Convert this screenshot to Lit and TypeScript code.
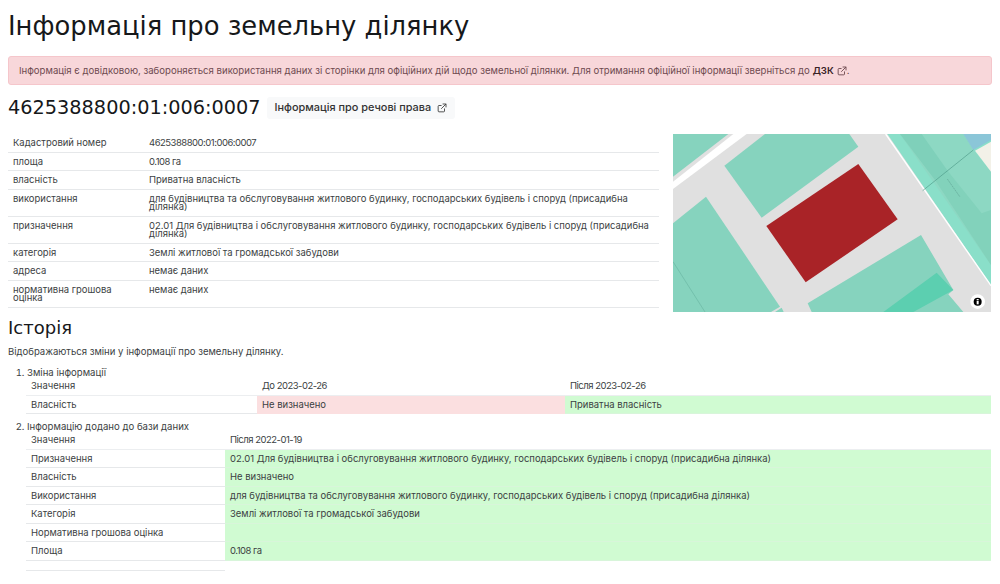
import { LitElement, html, css, svg } from "lit";
import { customElement } from "lit/decorators.js";

const ext = html`<svg class="ext" viewBox="0 0 12 12" fill="none" stroke="currentColor" stroke-width="1.1" stroke-linecap="round" stroke-linejoin="round"><path d="M9 7v2.6a1 1 0 0 1-1 1H2.4a1 1 0 0 1-1-1V4a1 1 0 0 1 1-1H5"/><path d="M7.2 1.2h3.6v3.6M10.6 1.4 5.4 6.6"/></svg>`;

const info: [string, string, boolean?][] = [
  ["Кадастровий номер", "4625388800:01:006:0007", true],
  ["площа", "0.108 га", true],
  ["власність", "Приватна власність"],
  ["використання", "для будівництва та обслуговування житлового будинку, господарських будівель і споруд (присадибна ділянка)"],
  ["призначення", "02.01 Для будівництва і обслуговування житлового будинку, господарських будівель і споруд (присадибна ділянка)"],
  ["категорія", "Землі житлової та громадської забудови"],
  ["адреса", "немає даних"],
  ["нормативна грошова оцінка", "немає даних"],
];

const added: [string, string, boolean?][] = [
  ["Призначення", "02.01 Для будівництва і обслуговування житлового будинку, господарських будівель і споруд (присадибна ділянка)"],
  ["Власність", "Не визначено"],
  ["Використання", "для будівництва та обслуговування житлового будинку, господарських будівель і споруд (присадибна ділянка)"],
  ["Категорія", "Землі житлової та громадської забудови"],
  ["Нормативна грошова оцінка", ""],
  ["Площа", "0.108 га", true],
];

@customElement("app-root")
export class AppRoot extends LitElement {
  static styles = css`
    :host { display: block; padding: 0 8px; height: 584px; box-sizing: border-box; overflow: hidden; background: #fff; color: #3c3f43; font: 9.6px/1.2 Inter, "Noto Sans", sans-serif; }
    h1, h2, h3 { margin: 0; font-family: "DejaVu Sans", sans-serif; font-weight: 400; color: #16181a; }
    h1 { font-size: 25.8px; line-height: 30px; padding-top: 11px; height: 46px; box-sizing: border-box; }
    .alert { height: 29px; box-sizing: border-box; display: flex; align-items: center; padding: 0 10px; background: #f8d7da; border: 1px solid #f5c6cb; border-radius: 3px; color: #6e4a50; margin-top: 10px; }
    .alert b { font-weight: 600; color: #3a2226; margin-left: 3px; }
    .ext { width: 10px; height: 10px; margin-left: 3px; }
    .parcel { display: flex; align-items: center; height: 22px; margin-top: 12px; gap: 6px; }
    h3 { font-size: 19.3px; line-height: 22px; }
    .btn { display: flex; align-items: center; height: 22px; padding: 0 8px; background: #f8f9fa; border-radius: 3px; font-weight: 500; font-size: 10.9px; color: #333; }
    .btn .ext { margin-left: 6px; color: #444; }
    .main { display: flex; gap: 14px; margin-top: 15px; align-items: flex-start; }
    table { border-collapse: separate; border-spacing: 0; table-layout: fixed; }
    td { padding: 5px 5px 4px; font-size: 9.47px; line-height: 8.5px; border-bottom: 1px solid #e6e8ea; vertical-align: top; }
    td.num { letter-spacing: -0.48px; }
    .info { width: 651px; flex: none; }
    .map { width: 318px; height: 178px; flex: none; display: block; }
    h2 { font-size: 18px; line-height: 22px; margin-top: 5px; }
    .lead { margin: 7px 0 0; line-height: 12px; font-size: 9.55px; }
    ol { margin: 9px 0 0; padding: 0 0 0 19px; }
    li { line-height: 12px; }
    li + li { margin-top: 7px; }
    li table { width: 965px; margin: -2px 0 0 -1px; }
    .t1 .a { width: 231px; } .t1 .b { width: 308px; }
    .t2 .a { width: 199px; }
    .head td { border-bottom-color: #eceef0; }
    .del { background: #fbdfe0; border-bottom-color: #fbdfe0; }
    .new { background: #d0fbd2; border-bottom-color: #d8f5da; }
    .empty td { height: 9px; padding: 0; }
    .empty td + td { border-bottom: 0; }
  `;

  private map() {
    return svg`
      <rect x="24" y="27" width="954" height="534" fill="#e0e0e0"/>
      <polygon points="24,27 190,27 24,155" fill="#86d3be"/>
      <polygon points="24,170 205,27 245,27 24,192" fill="#fff"/>
      <polygon points="300,27 553,27 580,65 290,278 178,122" fill="#86d3be"/>
      <polygon points="24,295 123,215 345,545 318,561 24,561" fill="#86d3be"/>
      <path d="M24 410 120 561" stroke="#4f9c8a" fill="none"/>
      <polygon points="330,561 350,548 356,561" fill="#86d3be"/>
      <polygon points="768,330 865,495 850,508 895,561 440,561 428,535" fill="#86d3be"/>
      <polygon points="815,443 865,495 745,561 655,561" fill="#5ccfb0"/>
      <polygon points="667,27 978,27 978,480" fill="#8adfc9"/>
      <path d="M662 27 978 482" stroke="#fff" stroke-width="4" fill="none"/>
      <polygon points="705,27 895,27 925,75 978,140 978,420" fill="#8dd8c3"/>
      <polygon points="705,27 770,27 850,140 810,165" fill="#7fd0ba"/>
      <polygon points="810,165 850,140 950,265 978,255 978,420" fill="#82d2bb"/>
      <path d="M847 162 885 216" stroke="#6db5a3" stroke-width="3" stroke-dasharray="6 2" fill="none"/>
      <polygon points="895,27 978,27 978,45 925,75" fill="#8bc6d8"/>
      <polygon points="930,77 978,50 978,140" fill="#f3f1e8"/>
      <path d="M773 197 925 75" stroke="#4f9c8a" stroke-width="2" fill="none"/>
      <polygon points="580,117 698,283 422,472 304,303" fill="#a92327"/>
      <circle cx="938" cy="530" r="22" fill="#fff"/>
      <circle cx="938" cy="530" r="12" fill="#000"/>
      <rect x="935" y="528" width="6" height="10" fill="#fff"/>
      <rect x="935" y="522" width="6" height="4" fill="#fff"/>
    `;
  }

  render() {
    return html`
      <h1>Інформація про земельну ділянку</h1>
      <div class="alert">Інформація є довідковою, забороняється використання даних зі сторінки для офіційних дій щодо земельної ділянки. Для отримання офіційної інформації зверніться до <b>ДЗК</b>${ext}.</div>
      <div class="parcel"><h3>4625388800:01:006:0007</h3><span class="btn">Інформація про речові права ${ext}</span></div>
      <div class="main">
        <table class="info">
          <colgroup><col style="width:136px" /><col /></colgroup>
          ${info.map(([k, v, n]) => html`<tr><td>${k}</td><td class=${n ? "num" : ""}>${v}</td></tr>`)}
        </table>
        <svg class="map" viewBox="24 27 954 534" preserveAspectRatio="none">${this.map()}</svg>
      </div>
      <h2>Історія</h2>
      <p class="lead">Відображаються зміни у інформації про земельну ділянку.</p>
      <ol>
        <li>Зміна інформації
          <table class="t1">
            <colgroup><col class="a" /><col class="b" /><col /></colgroup>
            <tr class="head"><td>Значення</td><td class="num">До 2023-02-26</td><td class="num">Після 2023-02-26</td></tr>
            <tr><td>Власність</td><td class="del">Не визначено</td><td class="new">Приватна власність</td></tr>
          </table>
        </li>
        <li>Інформацію додано до бази даних
          <table class="t2">
            <colgroup><col class="a" /><col /></colgroup>
            <tr class="head"><td>Значення</td><td class="num">Після 2022-01-19</td></tr>
            ${added.map(([k, v, n]) => html`<tr><td>${k}</td><td class="new ${n ? "num" : ""}">${v}</td></tr>`)}
            <tr class="empty"><td></td><td></td></tr>
          </table>
        </li>
      </ol>
    `;
  }
}
